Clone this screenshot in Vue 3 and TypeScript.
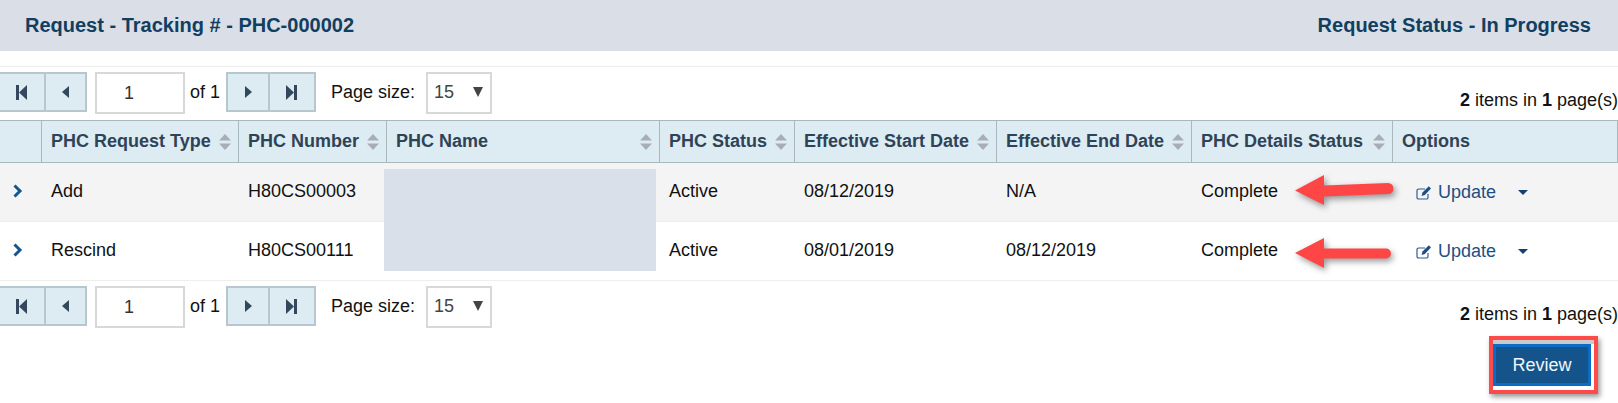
<script setup lang="ts">
interface Col { label: string; sort: boolean; width: number }
const cols: Col[] = [
  { label: '', sort: false, width: 42 },
  { label: 'PHC Request Type', sort: true, width: 197 },
  { label: 'PHC Number', sort: true, width: 148 },
  { label: 'PHC Name', sort: true, width: 273 },
  { label: 'PHC Status', sort: true, width: 135 },
  { label: 'Effective Start Date', sort: true, width: 202 },
  { label: 'Effective End Date', sort: true, width: 195 },
  { label: 'PHC Details Status', sort: true, width: 201 },
  { label: 'Options', sort: false, width: 225 }
]
const rows = [
  ['Add', 'H80CS00003', '', 'Active', '08/12/2019', 'N/A', 'Complete'],
  ['Rescind', 'H80CS00111', '', 'Active', '08/01/2019', '08/12/2019', 'Complete']
]
const sections = ['top', 'grid', 'bottom']
</script>

<template>
  <div class="page">
    <header class="band">
      <span>Request - Tracking # - PHC-000002</span>
      <span>Request Status - In Progress</span>
    </header>
    <div class="rule"></div>

    <template v-for="p in sections" :key="p">
      <div v-if="p !== 'grid'" :class="['pager', p]">
        <div class="btns left">
          <button class="pbtn first"><svg width="12" height="15" viewBox="0 0 12 15"><rect x="0" y="0" width="3" height="15" /><path d="M11 0v15L3 7.500z" /></svg></button>
          <button class="pbtn prev"><svg width="7" height="12" viewBox="0 0 7 12"><path d="M7 0v12L0 6z" /></svg></button>
        </div>
        <div class="pinput">1</div>
        <span class="of">of 1</span>
        <div class="btns">
          <button class="pbtn next"><svg width="7" height="12" viewBox="0 0 7 12"><path d="M0 0v12l7-6z" /></svg></button>
          <button class="pbtn last"><svg width="12" height="15" viewBox="0 0 12 15"><path d="M0 0v15l8-7.500z" /><rect x="8" y="0" width="3" height="15" /></svg></button>
        </div>
        <span class="psize">Page size:</span>
        <div class="select"><span>15</span><i class="tri"></i></div>
        <span class="count"><b>2</b> items in <b>1</b> page(s)</span>
      </div>

      <div v-else class="grid">
        <div class="thead">
          <div v-for="c in cols" :key="c.label" class="th" :style="{ width: c.width + 'px' }">
            <span>{{ c.label }}</span>
            <svg v-if="c.sort" class="sort" width="12" height="16" viewBox="0 0 12 16"><path d="M6 0l6 6.500H0zM0 9.500h12L6 16z" /></svg>
          </div>
        </div>
        <div v-for="(r, i) in rows" :key="r[0]" :class="['tr', { alt: i === 0 }]">
          <div class="td chev" :style="{ width: cols[0].width + 'px' }">
            <svg width="11" height="14" viewBox="0 0 11 14"><path d="M2.500 1.500l5.500 5.500-5.500 5.500" fill="none" stroke="#15568c" stroke-width="3" /></svg>
          </div>
          <div v-for="(v, j) in r" :key="j" class="td" :style="{ width: cols[j + 1].width + 'px' }">{{ v }}</div>
          <div class="td opts" :style="{ width: cols[8].width + 'px' }">
            <svg class="edit" width="16" height="15" viewBox="0 0 16 15">
              <path d="M12 9v3.400a1.600 1.600 0 0 1-1.600 1.600H2.600A1.600 1.600 0 0 1 1 12.400V5.600A1.600 1.600 0 0 1 2.600 4H9" fill="none" stroke="#2a5f92" stroke-width="1.200" />
              <path d="M5.500 11l1-3.500L12.800 1.200l2.200 2.200L8.800 10z" fill="#1f4f80" />
            </svg>
            <span class="upd">Update</span>
            <i class="caret"></i>
          </div>
        </div>
      </div>
    </template>

    <div class="actions">
      <button class="review">Review</button>
    </div>

    <div class="mask"></div>
    <svg class="arrow a1" width="104" height="36" viewBox="0 0 104 36"><path d="M2 17.500L31 2v10.500L95 10a5.500 5.500 0 0 1 0 11l-64 2.500V32z" /></svg>
    <svg class="arrow a2" width="104" height="36" viewBox="0 0 104 36"><path d="M2 17L31 2v10.500h62a5 5 0 0 1 0 10H31V32z" /></svg>
    <div class="frame"><div class="frame-top"></div></div>
  </div>
</template>

<style>
html, body { margin: 0; background: #fff; }
</style>

<style scoped>
.page {
  position: relative;
  width: 1618px;
  height: 403px;
  overflow: hidden;
  background: #fff;
  font-family: "Liberation Sans", Arial, sans-serif;
  font-size: 18px;
  color: #111;
}
.band {
  height: 51px;
  background: #d9dee7;
  display: flex;
  justify-content: space-between;
  align-items: center;
  padding: 0 27px 0 25px;
  font-weight: 700;
  font-size: 20px;
  color: #123f5f;
}
.rule { height: 1px; background: #eee; margin-top: 15px; }
.pager {
  position: relative;
  height: 42px;
  display: flex;
  align-items: flex-start;
}
.pager.top { margin-top: 5px; }
.pager.bottom { margin-top: 5px; }
.btns {
  display: flex;
  height: 40px;
  box-sizing: border-box;
  background: #ddebf3;
  border: 2px solid #b8c6d0;
}
.btns.left { border-left: 0; }
.pbtn {
  display: flex;
  align-items: center;
  justify-content: center;
  padding: 0;
  height: 36px;
  border: 0;
  background: transparent;
}
.pbtn svg { fill: #33485c; }
.pbtn.first { width: 46px; border-right: 2px solid #b8c6d0; }
.pbtn.prev { width: 39px; }
.pbtn.next { width: 42px; border-right: 2px solid #b8c6d0; }
.pbtn.last { width: 44px; }
.pinput {
  box-sizing: border-box;
  width: 90px;
  height: 42px;
  margin-left: 8px;
  border: 2px solid #d8d8d8;
  text-align: center;
  line-height: 38px;
  padding-right: 22px;
  color: #333;
}
.of { margin: 0 6px 0 5px; line-height: 40px; }
.psize { margin-left: 15px; line-height: 40px; }
.select {
  box-sizing: border-box;
  width: 66px;
  height: 42px;
  margin-left: 11px;
  border: 2px solid #d8d8d8;
  display: flex;
  align-items: center;
  justify-content: space-between;
  padding: 0 7px 2px 6px;
  color: #444;
}
.tri {
  width: 0;
  height: 0;
  border-left: 5px solid transparent;
  border-right: 5px solid transparent;
  border-top: 10px solid #444;
}
.count { position: absolute; right: 0; top: 18px; white-space: nowrap; }
.count b { font-weight: 700; }
.grid { margin-top: 6px; }
.thead { display: flex; box-sizing: border-box; border: solid #a9b8bd; border-width: 1px 0; background: #ddebf3; height: 43px; }
.th {
  box-sizing: border-box;
  display: flex;
  align-items: center;
  justify-content: space-between;
  padding: 0 7px 0 9px;
  border-right: 1px solid #a9b8bd;
  font-weight: 700;
  color: #2f4356;
  white-space: nowrap;
}
.th:first-child { padding: 0; }
.sort { fill: #a9aeb5; flex: none; }
.tr { display: flex; box-sizing: border-box; height: 59px; border-bottom: 1px solid #eee; align-items: center; }
.tr.alt { background: #f4f4f4; }
.td { box-sizing: border-box; padding-left: 9px; white-space: nowrap; padding-bottom: 2px; }
.chev { padding-left: 12px; padding-top: 0; padding-bottom: 2px; display: flex; }
.opts { display: flex; align-items: center; padding-left: 23px; padding-bottom: 0; color: #1d4f85; }
.edit { margin-right: 6px; margin-top: 1px; }
.caret {
  width: 0;
  height: 0;
  margin-left: 22px;
  border-left: 5px solid transparent;
  border-right: 5px solid transparent;
  border-top: 5px solid #123f70;
}
.actions { display: flex; justify-content: flex-end; padding: 0 27px 0 0; margin-top: 16px; }
.review {
  box-sizing: border-box;
  width: 98px;
  height: 42px;
  padding: 0;
  background: #14548a;
  border: 3px solid #0a6cc4;
  color: #f2f6fa;
  font: inherit;
}
.mask { position: absolute; left: 384px; top: 169px; width: 272px; height: 102px; background: #d9e0e9; }
.arrow { position: absolute; fill: #ff4646; filter: drop-shadow(2px 3px 3px rgba(0,0,0,.4)); }
.a1 { left: 1293px; top: 173px; }
.a2 { left: 1293px; top: 236px; }
.frame {
  position: absolute;
  left: 1489px;
  top: 336px;
  width: 109px;
  height: 58px;
  box-sizing: border-box;
  border: 4px solid #ff4a4a;
  box-shadow: 2px 3px 5px rgba(0,0,0,.4);
}
.frame-top { height: 4px; background: #c9c9c9; }
</style>
